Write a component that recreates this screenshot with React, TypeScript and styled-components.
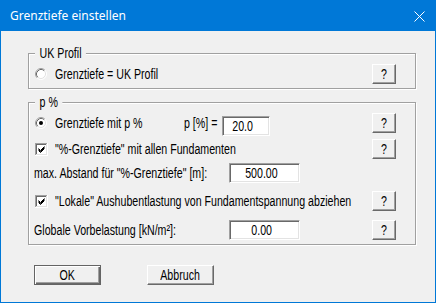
import React from "react";
import styled, { createGlobalStyle } from "styled-components";

const Global = createGlobalStyle`
  html, body { margin: 0; padding: 0; background: #f0f0f0; }
  body { font-family: "Liberation Sans", Arial, sans-serif; }
  * { box-sizing: border-box; }
`;

const Window = styled.div`
  width: 436px;
  height: 303px;
  border: 1px solid #0078d7;
  background: #f0f0f0;
  display: flex;
  flex-direction: column;
  overflow: hidden;
`;

const TitleBar = styled.div`
  height: 30px;
  flex: none;
  background: #0078d7;
  display: flex;
  align-items: center;
  justify-content: space-between;
  padding: 0 10px 0 9px;
`;

const Title = styled.span`
  font-family: "Noto Sans", "Open Sans", sans-serif;
  font-size: 12px;
  line-height: 16px;
  color: #fff;
`;

const Body = styled.div`
  flex: 1;
  display: flex;
  flex-direction: column;
  padding: 22px 0 0 27px;
`;

const Group = styled.div<{ $pt: number; $pb: number }>`
  position: relative;
  width: 388px;
  border: 1px solid #a0a0a0;
  box-shadow: 1px 1px 0 #fff, inset 1px 1px 0 #fff;
  padding: ${(p) => p.$pt}px 19px ${(p) => p.$pb}px 6px;
  display: flex;
  flex-direction: column;
  & + & {
    margin-top: 13px;
  }
`;

const Text = styled.span<{ $w?: number; $ml?: number }>`
  display: inline-block;
  flex: none;
  width: ${(p) => (p.$w ? `${p.$w}px` : "auto")};
  margin-left: ${(p) => p.$ml ?? 0}px;
  font-size: 14px;
  line-height: 16px;
  color: #000;
  white-space: nowrap;
  transform: scaleX(0.76);
  transform-origin: 0 50%;
`;

const CenterText = styled(Text)`
  transform-origin: 50% 50%;
`;

const Legend = styled(Text)`
  position: absolute;
  top: -9px;
  left: 6px;
  padding: 0 6px;
  background: #f0f0f0;
`;

const Row = styled.div<{ $mt?: number }>`
  height: 20px;
  margin-top: ${(p) => p.$mt ?? 0}px;
  display: flex;
  align-items: center;
`;

const Spacer = styled.div`
  flex: 1;
`;

const Field = styled.div<{ $w: number; $dy?: number }>`
  width: ${(p) => p.$w}px;
  height: 20px;
  flex: none;
  margin-top: ${(p) => (p.$dy ?? 0) * 2}px;
  background: #fff;
  border: 1px solid;
  border-color: #a0a0a0 #fff #fff #a0a0a0;
  box-shadow: inset 1px 1px 0 #696969, inset -1px -1px 0 #e3e3e3;
  display: flex;
  align-items: center;
  justify-content: center;
  padding-right: 6px;
`;

const HelpButton = styled.button`
  width: 24px;
  height: 20px;
  flex: none;
  padding: 0;
  margin: 0;
  background: #f0f0f0;
  border: 1px solid;
  border-color: #fff #696969 #696969 #fff;
  box-shadow: inset -1px -1px 0 #a0a0a0;
  display: flex;
  align-items: center;
  justify-content: center;
  font-family: "Liberation Sans", Arial, sans-serif;
`;

const ButtonRow = styled.div`
  display: flex;
  gap: 46px;
  margin-top: 20px;
  padding-left: 6px;
`;

const DialogButton = styled.button<{ $default?: boolean }>`
  width: 67px;
  height: 20px;
  padding: 0;
  margin: 0;
  background: #f0f0f0;
  border: 1px solid;
  border-color: ${(p) =>
    p.$default ? "#646464" : "#fff #696969 #696969 #fff"};
  box-shadow: ${(p) =>
    p.$default
      ? "inset 1px 1px 0 #fff, inset -1px -1px 0 #696969, inset -2px -2px 0 #a0a0a0"
      : "inset -1px -1px 0 #a0a0a0"};
  display: flex;
  align-items: center;
  justify-content: center;
  font-family: "Liberation Sans", Arial, sans-serif;
`;

const Mark = styled.svg<{ $mr: number }>`
  flex: none;
  display: block;
  margin-right: ${(p) => p.$mr}px;
`;

const Radio = ({ checked }: { checked?: boolean }) => (
  <Mark $mr={8} width="12" height="12" viewBox="0 0 12 12">
    <circle cx="6" cy="6" r="5" fill="#fff" />
    <path d="M2.11 9.89 A5.5 5.5 0 0 1 9.89 2.11" fill="none" stroke="#a0a0a0" strokeWidth="1" />
    <path d="M9.89 2.11 A5.5 5.5 0 0 1 2.11 9.89" fill="none" stroke="#ffffff" strokeWidth="1" />
    <path d="M2.82 9.18 A4.5 4.5 0 0 1 9.18 2.82" fill="none" stroke="#696969" strokeWidth="1" />
    <path d="M9.18 2.82 A4.5 4.5 0 0 1 2.82 9.18" fill="none" stroke="#e3e3e3" strokeWidth="1" />
    {checked && <circle cx="6" cy="6" r="2" fill="#000" />}
  </Mark>
);

const Check = () => (
  <Mark $mr={7} width="13" height="13" viewBox="0 0 13 13" shapeRendering="crispEdges">
    <rect x="0" y="0" width="13" height="13" fill="#fff" />
    <path d="M0.5 12 V0.5 H12" fill="none" stroke="#a0a0a0" />
    <path d="M0 12.5 H12.5 V0" fill="none" stroke="#fff" />
    <path d="M1.5 11 V1.5 H11" fill="none" stroke="#696969" />
    <path d="M1 11.5 H11.5 V1" fill="none" stroke="#e3e3e3" />
    <path d="M3.5 5.5 L5.5 7.5 L9.5 3.5" fill="none" stroke="#000" shapeRendering="auto" />
    <path d="M3.5 6.5 L5.5 8.5 L9.5 4.5" fill="none" stroke="#000" shapeRendering="auto" />
    <path d="M3.5 7.5 L5.5 9.5 L9.5 5.5" fill="none" stroke="#000" shapeRendering="auto" />
  </Mark>
);

const CloseIcon = () => (
  <svg width="11" height="11" viewBox="0 0 11 11">
    <path d="M0.5 0.5 L10.5 10.5 M10.5 0.5 L0.5 10.5" stroke="#fff" strokeWidth="1" />
  </svg>
);

const Help = () => (
  <HelpButton>
    <CenterText>?</CenterText>
  </HelpButton>
);

export default function App() {
  return (
    <>
      <Global />
      <Window>
        <TitleBar>
          <Title>Grenztiefe einstellen</Title>
          <CloseIcon />
        </TitleBar>
        <Body>
          <Group $pt={10} $pb={4}>
            <Legend>UK Profil</Legend>
            <Row>
              <Radio />
              <Text $w={140}>Grenztiefe = UK Profil</Text>
              <Spacer />
              <Help />
            </Row>
          </Group>
          <Group $pt={10} $pb={4}>
            <Legend>p %</Legend>
            <Row>
              <Radio checked />
              <Text $w={129}>Grenztiefe mit p %</Text>
              <Text $w={38}>p [%] =</Text>
              <Field $w={48} $dy={3}>
                <CenterText>20.0</CenterText>
              </Field>
              <Spacer />
              <Help />
            </Row>
            <Row $mt={6}>
              <Check />
              <Text $w={250}>"%-Grenztiefe" mit allen Fundamenten</Text>
              <Spacer />
              <Help />
            </Row>
            <Row $mt={4}>
              <Text $w={195} $ml={-1}>max. Abstand für "%-Grenztiefe" [m]:</Text>
              <Field $w={71}>
                <CenterText>500.00</CenterText>
              </Field>
            </Row>
            <Row $mt={8}>
              <Check />
              <Text $w={305}>"Lokale" Aushubentlastung von Fundamentspannung abziehen</Text>
              <Spacer />
              <Help />
            </Row>
            <Row $mt={9}>
              <Text $w={195} $ml={-1}>Globale Vorbelastung [kN/m²]:</Text>
              <Field $w={71}>
                <CenterText>0.00</CenterText>
              </Field>
              <Spacer />
              <Help />
            </Row>
          </Group>
          <ButtonRow>
            <DialogButton $default>
              <CenterText>OK</CenterText>
            </DialogButton>
            <DialogButton>
              <CenterText>Abbruch</CenterText>
            </DialogButton>
          </ButtonRow>
        </Body>
      </Window>
    </>
  );
}
